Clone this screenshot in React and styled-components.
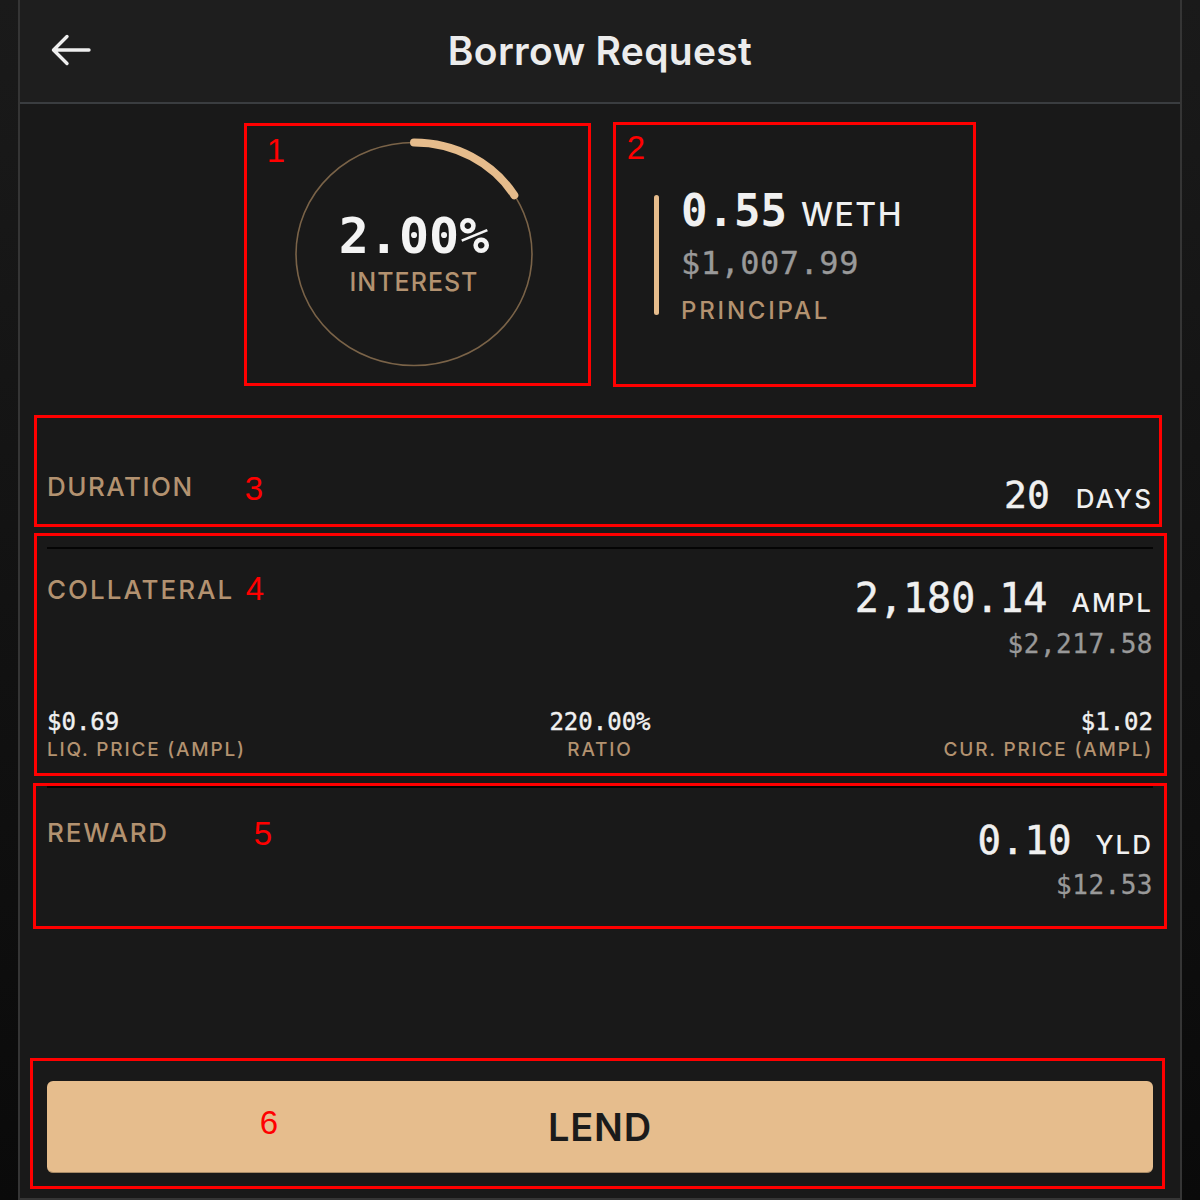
import React from 'react';
import styled, { createGlobalStyle } from 'styled-components';

const GlobalStyle = createGlobalStyle`
	html, body {
		margin: 0;
		padding: 0;
		background: #141414;
	}
	* { box-sizing: border-box; }
`;

const SANS = `"Inter", "Noto Sans", "Liberation Sans", sans-serif`;
const MONO = `"DejaVu Sans Mono", "Liberation Mono", monospace`;

const Page = styled.div`
	position: relative;
	width: 1200px;
	height: 1200px;
	display: flex;
	justify-content: center;
	background: linear-gradient(180deg, #1a1a1a 0%, #0a0a0a 100%);
	font-family: ${SANS};
`;

const Panel = styled.div`
	width: 1164px;
	height: 100%;
	display: flex;
	flex-direction: column;
	background: #191919;
	border-left: 2px solid #353535;
	border-right: 2px solid #353535;
	border-bottom: 2px solid #353535;
`;

const Header = styled.header`
	height: 104px;
	display: grid;
	grid-template-columns: 1fr auto 1fr;
	align-items: center;
	padding: 0 30px 2px;
	background: #1e1e1e;
	border-bottom: 2px solid #3a3d40;
`;

const BackButton = styled.button`
	justify-self: start;
	display: flex;
	padding: 0;
	border: 0;
	background: none;
	cursor: pointer;
`;

const Title = styled.h1`
	margin: 0;
	font-size: 39px;
	font-weight: 600;
	color: #ececec;
	letter-spacing: 0.3px;
`;

const Body = styled.main`
	flex: 1;
	display: flex;
	flex-direction: column;
	padding: 0 27px 25px;
`;

const TopRow = styled.section`
	display: flex;
	align-items: center;
	gap: 115px;
	padding: 30px 0 0 242px;
`;

const Ring = styled.div`
	position: relative;
	width: 250px;
	height: 240px;
	display: flex;
	flex-direction: column;
	align-items: center;
	justify-content: center;
	svg {
		position: absolute;
		inset: 0;
	}
`;

const RingValue = styled.div`
	position: relative;
	font-family: ${MONO};
	font-weight: 700;
	font-size: 50px;
	line-height: 62px;
	color: #f4f4f4;
`;

const Label = styled.div`
	position: relative;
	margin-top: ${p => p.$mt || 0}px;
	margin-bottom: ${p => p.$mb || 0}px;
	font-size: ${p => p.$size || 26}px;
	line-height: ${p => p.$lh || 28}px;
	font-weight: 500;
	letter-spacing: ${p => p.$spacing ?? 1.5}px;
	color: #b39270;
`;

const Principal = styled.div`
	display: flex;
	gap: 22px;
	margin-top: 6px;
`;

const Bar = styled.div`
	width: 5px;
	margin: 6px 0 10px;
	border-radius: 3px;
	background: #e6bc8c;
`;

const Stack = styled.div`
	display: flex;
	flex-direction: column;
	align-items: ${p => (p.$right ? 'flex-end' : 'flex-start')};
`;

const Amount = styled.div`
	display: flex;
	align-items: baseline;
	gap: ${p => p.$gap || 16}px;
	line-height: 44px;
	color: #f0f0f0;
`;

const Number = styled.span`
	font-family: ${MONO};
	font-size: ${p => p.$size}px;
	font-weight: ${p => (p.$bold ? 700 : 400)};
	-webkit-text-stroke: ${p => (p.$bold ? 0 : 0.5)}px currentColor;
`;

const Unit = styled.span`
	font-size: ${p => p.$size || 26}px;
	font-weight: 500;
	letter-spacing: ${p => p.$spacing ?? 2}px;
`;

const Fiat = styled.div`
	font-family: ${MONO};
	font-size: ${p => p.$size}px;
	line-height: ${p => p.$lh}px;
	margin-top: ${p => p.$mt || 0}px;
	color: #999;
	letter-spacing: 0.5px;
	-webkit-text-stroke: 0.3px currentColor;
`;

const Row = styled.section`
	display: flex;
	justify-content: space-between;
	align-items: flex-start;
	margin-top: ${p => p.$mt}px;
`;

const Divider = styled.hr`
	margin: ${p => p.$mt}px 0 0;
	border: 0;
	height: 2px;
	background: #050505;
`;

const Stats = styled.div`
	display: grid;
	grid-template-columns: 1fr 1fr 1fr;
	margin-top: 49px;
`;

const Stat = styled.div`
	display: flex;
	flex-direction: column;
	align-items: ${p => p.$align};
`;

const StatValue = styled.div`
	font-family: ${MONO};
	font-size: 24px;
	line-height: 28px;
	color: #f0f0f0;
	-webkit-text-stroke: 0.4px currentColor;
`;

const LendButton = styled.button`
	margin-top: auto;
	height: 92px;
	border: 0;
	border-bottom: 1px solid #a88a66;
	border-radius: 6px;
	background: #e6bd8d;
	color: #1b1b1b;
	font-family: ${SANS};
	font-size: 38px;
	font-weight: 600;
	letter-spacing: 0.8px;
	cursor: pointer;
`;

/* red annotation overlay from the screenshot */
const Mark = styled.div`
	position: absolute;
	left: ${p => p.$x}px;
	top: ${p => p.$y}px;
	width: ${p => p.$w}px;
	height: ${p => p.$h}px;
	border: 3px solid #ff0000;
	pointer-events: none;
`;

const MarkNumber = styled.span`
	position: absolute;
	left: ${p => p.$x}px;
	top: ${p => p.$y}px;
	transform: translate(-50%, -50%);
	font-family: "Liberation Sans", sans-serif;
	font-size: 33px;
	line-height: 1;
	color: #ff0000;
`;

const marks = [
	{ n: 1, x: 244, y: 123, w: 347, h: 263, nx: 276, ny: 150 },
	{ n: 2, x: 613, y: 122, w: 363, h: 265, nx: 636, ny: 147 },
	{ n: 3, x: 34, y: 415, w: 1128, h: 112, nx: 254, ny: 488 },
	{ n: 4, x: 34, y: 533, w: 1133, h: 243, nx: 255, ny: 588 },
	{ n: 5, x: 33, y: 783, w: 1134, h: 146, nx: 263, ny: 833 },
	{ n: 6, x: 30, y: 1058, w: 1135, h: 131, nx: 269, ny: 1122 },
];

const BackArrow = () => (
	<svg width="42" height="34" viewBox="0 0 42 34" fill="none">
		<path d="M39 17H4M17 3.5L3.5 17L17 30.5" stroke="#eeeeee" strokeWidth="3.4" strokeLinecap="round" strokeLinejoin="round" />
	</svg>
);

const InterestRing = () => (
	<svg width="250" height="240" viewBox="0 0 250 240">
		<ellipse cx="125" cy="120" rx="118" ry="111.5" fill="none" stroke="#7a6348" strokeWidth="1.6" />
		<path d="M125 8.5 A118 111.5 0 0 1 225.3 61.2" fill="none" stroke="#e6bc8c" strokeWidth="8" strokeLinecap="round" />
	</svg>
);

const App = () => {
	return (
		<>
			<GlobalStyle />
			<Page>
				<Panel>
					<Header>
						<BackButton aria-label="Back"><BackArrow /></BackButton>
						<Title>Borrow Request</Title>
						<span />
					</Header>

					<Body>
						<TopRow>
							<Ring>
								<InterestRing />
								<RingValue>2.00%</RingValue>
								<Label $size={25} $lh={30} $spacing={1} $mb={6}>INTEREST</Label>
							</Ring>

							<Principal>
								<Bar />
								<Stack>
									<Amount $gap={14}>
										<Number $size={44} $bold>0.55</Number>
										<Unit $size={32} $spacing={1.5}>WETH</Unit>
									</Amount>
									<Fiat $size={32} $lh={44} $mt={4}>$1,007.99</Fiat>
									<Label $size={24} $lh={28} $spacing={2.8} $mt={12}>PRINCIPAL</Label>
								</Stack>
							</Principal>
						</TopRow>

						<Row $mt={99}>
							<Label>DURATION</Label>
							<Amount $gap={26}>
								<Number $size={38}>20</Number>
								<Unit>DAYS</Unit>
							</Amount>
						</Row>

						<Divider $mt={26} />

						<Row $mt={27}>
							<Label $spacing={2}>COLLATERAL</Label>
							<Stack $right>
								<Amount $gap={24}>
									<Number $size={40}>2,180.14</Number>
									<Unit>AMPL</Unit>
								</Amount>
								<Fiat $size={26} $lh={30} $mt={4}>$2,217.58</Fiat>
							</Stack>
						</Row>

						<Stats>
							<Stat $align="flex-start">
								<StatValue>$0.69</StatValue>
								<Label $size={19} $lh={24} $spacing={1.8} $mt={2}>LIQ. PRICE (AMPL)</Label>
							</Stat>
							<Stat $align="center">
								<StatValue>220.00%</StatValue>
								<Label $size={19} $lh={24} $spacing={1.8} $mt={2}>RATIO</Label>
							</Stat>
							<Stat $align="flex-end">
								<StatValue>$1.02</StatValue>
								<Label $size={19} $lh={24} $spacing={1.8} $mt={2}>CUR. PRICE (AMPL)</Label>
							</Stat>
						</Stats>

						<Divider $mt={24} />

						<Row $mt={31}>
							<Label $spacing={1.8}>REWARD</Label>
							<Stack $right>
								<Amount $gap={24}>
									<Number $size={39}>0.10</Number>
									<Unit>YLD</Unit>
								</Amount>
								<Fiat $size={26} $lh={30} $mt={3}>$12.53</Fiat>
							</Stack>
						</Row>

						<LendButton>LEND</LendButton>
					</Body>
				</Panel>

				{marks.map(m => (
					<React.Fragment key={m.n}>
						<Mark $x={m.x} $y={m.y} $w={m.w} $h={m.h} />
						<MarkNumber $x={m.nx} $y={m.ny}>{m.n}</MarkNumber>
					</React.Fragment>
				))}
			</Page>
		</>
	);
};

export default App;
